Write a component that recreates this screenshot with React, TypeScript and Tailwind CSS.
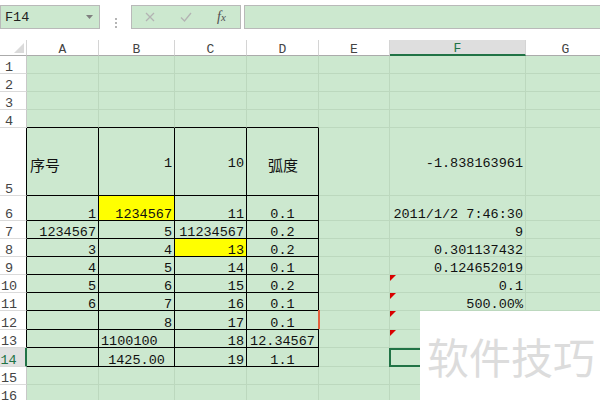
import React from 'react';

const GRID = 'border-r-[#bcd8be]';
const GRID_B = 'border-b-[#bcd8be]';

const COLS = [
  { key: 'A', w: 'w-[72px]' },
  { key: 'B', w: 'w-[76px]' },
  { key: 'C', w: 'w-[72px]' },
  { key: 'D', w: 'w-[72px]' },
  { key: 'E', w: 'w-[71px]' },
  { key: 'F', w: 'w-[136px]' },
  { key: 'G', w: 'w-[80px]' },
];

type Cell = {
  v?: string;
  align?: 'l' | 'r' | 'c';
  yellow?: boolean;
  cjk?: boolean;
  tri?: boolean;
  redLine?: boolean;
  selected?: boolean;
};

type RowData = { n: number; h: string; mid?: boolean; cells: Record<string, Cell> };

const ROWS: RowData[] = [
  { n: 1, h: 'h-[18px]', cells: {} },
  { n: 2, h: 'h-[18px]', cells: {} },
  { n: 3, h: 'h-[18px]', cells: {} },
  { n: 4, h: 'h-[18px]', cells: {} },
  {
    n: 5,
    h: 'h-[68px]',
    mid: true,
    cells: {
      A: { v: '序号', align: 'l', cjk: true },
      B: { v: '1', align: 'r' },
      C: { v: '10', align: 'r' },
      D: { v: '弧度', align: 'c', cjk: true },
      F: { v: '-1.838163961', align: 'r' },
    },
  },
  {
    n: 6,
    h: 'h-[25px]',
    cells: {
      A: { v: '1', align: 'r' },
      B: { v: '1234567', align: 'r', yellow: true },
      C: { v: '11', align: 'r' },
      D: { v: '0.1', align: 'c' },
      F: { v: '2011/1/2 7:46:30', align: 'r' },
    },
  },
  {
    n: 7,
    h: 'h-[18px]',
    cells: {
      A: { v: '1234567', align: 'r' },
      B: { v: '5', align: 'r' },
      C: { v: '11234567', align: 'r' },
      D: { v: '0.2', align: 'c' },
      F: { v: '9', align: 'r' },
    },
  },
  {
    n: 8,
    h: 'h-[18px]',
    cells: {
      A: { v: '3', align: 'r' },
      B: { v: '4', align: 'r' },
      C: { v: '13', align: 'r', yellow: true },
      D: { v: '0.2', align: 'c' },
      F: { v: '0.301137432', align: 'r' },
    },
  },
  {
    n: 9,
    h: 'h-[18px]',
    cells: {
      A: { v: '4', align: 'r' },
      B: { v: '5', align: 'r' },
      C: { v: '14', align: 'r' },
      D: { v: '0.1', align: 'c' },
      F: { v: '0.124652019', align: 'r' },
    },
  },
  {
    n: 10,
    h: 'h-[18px]',
    cells: {
      A: { v: '5', align: 'r' },
      B: { v: '6', align: 'r' },
      C: { v: '15', align: 'r' },
      D: { v: '0.2', align: 'c' },
      F: { v: '0.1', align: 'r', tri: true },
    },
  },
  {
    n: 11,
    h: 'h-[18px]',
    cells: {
      A: { v: '6', align: 'r' },
      B: { v: '7', align: 'r' },
      C: { v: '16', align: 'r' },
      D: { v: '0.1', align: 'c' },
      F: { v: '500.00%', align: 'r', tri: true },
    },
  },
  {
    n: 12,
    h: 'h-[19px]',
    cells: {
      B: { v: '8', align: 'r' },
      C: { v: '17', align: 'r' },
      D: { v: '0.1', align: 'c', redLine: true },
      F: { tri: true },
    },
  },
  {
    n: 13,
    h: 'h-[18px]',
    cells: {
      B: { v: '1100100', align: 'l' },
      C: { v: '18', align: 'r' },
      D: { v: '12.34567', align: 'c' },
      F: { tri: true },
    },
  },
  {
    n: 14,
    h: 'h-[19px]',
    cells: {
      B: { v: '1425.00', align: 'c' },
      C: { v: '19', align: 'r' },
      D: { v: '1.1', align: 'c' },
      F: { selected: true },
    },
  },
  { n: 15, h: 'h-[18px]', cells: {} },
  { n: 16, h: 'h-[18px]', cells: {} },
];

const FormulaBar = () => (
  <div className="flex h-[40px] pt-[5px] bg-white">
    {/* Name box */}
    <div className="w-[100px] h-[24px] shrink-0 border border-[#b9b9b9] bg-[#cce8cf] flex items-center justify-between pl-[4px] pr-[6px]">
      <span className="text-[13.5px] leading-none text-[#222] mt-[2px]">F14</span>
      <svg width="7" height="4" viewBox="0 0 7 4">
        <polygon points="0,0 7,0 3.5,4" fill="#7f7f7f" />
      </svg>
    </div>

    {/* Grip dots */}
    <div className="w-[31px] shrink-0 flex flex-col items-center justify-center gap-[2px]">
      <span className="w-[2px] h-[2px] bg-[#b5b5b5]" />
      <span className="w-[2px] h-[2px] bg-[#b5b5b5]" />
      <span className="w-[2px] h-[2px] bg-[#b5b5b5]" />
    </div>

    {/* Cancel / Enter / fx */}
    <div className="w-[110px] h-[24px] shrink-0 border border-[#b9b9b9] bg-[#cce8cf] flex items-center pl-[13px]">
      <svg width="10" height="10" viewBox="0 0 10 10">
        <path d="M1 1 L9 9 M9 1 L1 9" stroke="#b3b3b3" strokeWidth="1.3" fill="none" />
      </svg>
      <svg className="ml-[25px]" width="12" height="10" viewBox="0 0 12 10">
        <path d="M1 5.5 L4.5 9 L11 1" stroke="#b3b3b3" strokeWidth="1.3" fill="none" />
      </svg>
      <span className="ml-[25px] font-['Liberation_Serif',serif] italic text-[14px] leading-none text-[#505050]">
        f<span className="text-[11px]">x</span>
      </span>
    </div>

    <div className="w-[3px] shrink-0" />

    {/* Formula input */}
    <div className="w-[370px] h-[24px] shrink-0 border border-[#b9b9b9] bg-[#cce8cf]" />
  </div>
);

const ColumnHeader = () => (
  <div className="flex h-[16px]">
    <div className="w-[27px] shrink-0 border-r border-b border-r-[#d4d4d4] border-b-[#ababab] bg-white flex items-end justify-end pr-[2px] pb-[2px]">
      <svg width="10" height="10" viewBox="0 0 10 10">
        <polygon points="10,0 10,10 0,10" fill="#dadada" />
      </svg>
    </div>
    {COLS.map((c) =>
      c.key === 'F' ? (
        <div
          key={c.key}
          className={`${c.w} shrink-0 border-r border-r-[#d4d4d4] border-b-2 border-b-[#217346] bg-[#dedede] flex items-center justify-center pt-[3px]`}
        >
          <span className="text-[13px] leading-none text-[#217346]">{c.key}</span>
        </div>
      ) : (
        <div
          key={c.key}
          className={`${c.w} shrink-0 border-r border-b border-r-[#d4d4d4] border-b-[#ababab] bg-white flex items-center justify-center pt-[3px]`}
        >
          <span className="text-[13px] leading-none text-[#444]">{c.key}</span>
        </div>
      )
    )}
  </div>
);

const Row = ({ row }: { row: RowData }) => {
  const inTable = row.n >= 5 && row.n <= 14;
  const active = row.n === 14;

  const headerCls = active
    ? 'bg-[#e1e1e1] text-[#217346] border-r-2 border-r-[#217346]'
    : inTable
    ? 'bg-white text-[#444] border-r border-r-black'
    : 'bg-white text-[#444] border-r border-r-[#c8c8c8]';

  return (
    <div className={`flex ${row.h}`}>
      <div className={`w-[27px] shrink-0 flex items-end justify-center pr-[8px] border-b border-b-[#dadada] ${headerCls}`}>
        <span className="text-[13.5px] leading-none mb-[-1px]">{row.n}</span>
      </div>

      {COLS.map((c, i) => {
        const cell = row.cells[c.key] || {};
        const rightBlack = inTable && i <= 3;
        const bottomBlack = row.n >= 4 && row.n <= 14 && i <= 3;
        const justify =
          cell.align === 'l' ? 'justify-start pl-[2px]' : cell.align === 'c' ? 'justify-center' : 'justify-end pr-[2px]';
        const needsRel = cell.tri || cell.redLine || cell.selected;

        return (
          <div
            key={c.key}
            className={`${c.w} shrink-0 flex border-r border-b ${rightBlack ? 'border-r-black' : GRID} ${
              bottomBlack ? 'border-b-black' : GRID_B
            } ${cell.yellow ? 'bg-[#ffff00]' : 'bg-[#cce8cf]'} ${row.mid ? 'items-center pt-[5px]' : 'items-end'} ${justify} ${
              needsRel ? 'relative' : ''
            }`}
          >
            {cell.v &&
              (cell.cjk ? (
                <span className="font-['Noto_Sans_CJK_SC',sans-serif] text-[15px] leading-none text-[#111] pl-[1px]">
                  {cell.v}
                </span>
              ) : (
                <span className={`text-[13.5px] leading-none text-[#111] whitespace-nowrap ${row.mid ? '' : 'mb-[-1px]'}`}>
                  {cell.v}
                </span>
              ))}

            {cell.tri && (
              <svg className="absolute left-0 top-0" width="6" height="6" viewBox="0 0 6 6">
                <polygon points="0,0 6,0 0,6" fill="#d90000" />
              </svg>
            )}

            {cell.redLine && <span className="absolute -right-[2px] -top-[1px] bottom-0 w-[2px] bg-[#e4603e]" />}

            {cell.selected && (
              <span className="absolute -left-[1px] top-0 right-0 -bottom-[1px] border-2 border-[#217346]" />
            )}
          </div>
        );
      })}
    </div>
  );
};

export default function App() {
  return (
    <div className="relative w-[600px] h-[400px] overflow-hidden bg-white font-['Liberation_Mono',monospace]">
      <FormulaBar />
      <ColumnHeader />
      {ROWS.map((r) => (
        <Row key={r.n} row={r} />
      ))}

      {/* Watermark */}
      <div className="absolute left-[420px] top-[311px] w-[180px] h-[89px] bg-white flex items-center pl-[7px]">
        <span className="font-['Noto_Sans_CJK_SC',sans-serif] text-[42px] leading-none text-[#dcdcdc]">软件技巧</span>
      </div>
    </div>
  );
}
